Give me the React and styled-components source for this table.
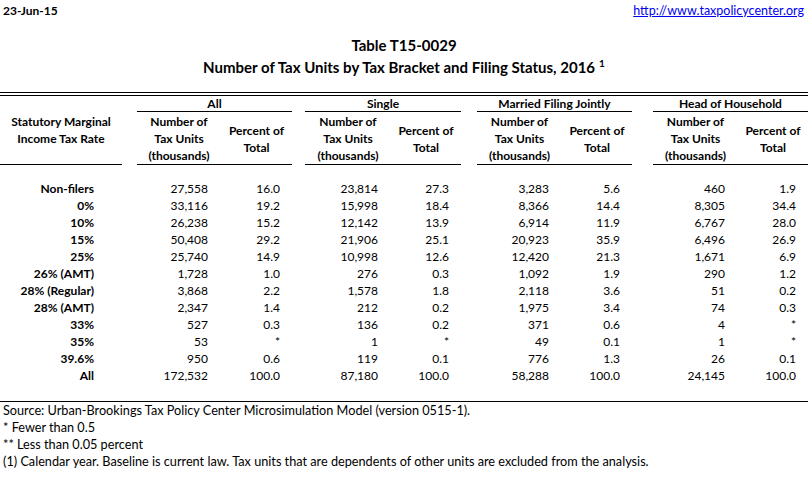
import React from 'react';
import styled, { createGlobalStyle } from 'styled-components';

const GlobalStyle = createGlobalStyle`
  html, body {
    margin: 0;
    padding: 0;
    background: #ffffff;
  }
  body {
    font-family: Lato, "Open Sans", "Liberation Sans", sans-serif;
    color: #000000;
  }
`;

const COLS = '122px 15px 84px 71px 13px 86px 70px 16px 85px 70px 21px 85px 70px';

const groups = ['All', 'Single', 'Married Filing Jointly', 'Head of Household'];

const rows = [
  ['Non-filers', '27,558', '16.0', '23,814', '27.3', '3,283', '5.6', '460', '1.9'],
  ['0%', '33,116', '19.2', '15,998', '18.4', '8,366', '14.4', '8,305', '34.4'],
  ['10%', '26,238', '15.2', '12,142', '13.9', '6,914', '11.9', '6,767', '28.0'],
  ['15%', '50,408', '29.2', '21,906', '25.1', '20,923', '35.9', '6,496', '26.9'],
  ['25%', '25,740', '14.9', '10,998', '12.6', '12,420', '21.3', '1,671', '6.9'],
  ['26% (AMT)', '1,728', '1.0', '276', '0.3', '1,092', '1.9', '290', '1.2'],
  ['28% (Regular)', '3,868', '2.2', '1,578', '1.8', '2,118', '3.6', '51', '0.2'],
  ['28% (AMT)', '2,347', '1.4', '212', '0.2', '1,975', '3.4', '74', '0.3'],
  ['33%', '527', '0.3', '136', '0.2', '371', '0.6', '4', '*'],
  ['35%', '53', '*', '1', '*', '49', '0.1', '1', '*'],
  ['39.6%', '950', '0.6', '119', '0.1', '776', '1.3', '26', '0.1'],
  ['All', '172,532', '100.0', '87,180', '100.0', '58,288', '100.0', '24,145', '100.0'],
];

const notes = [
  'Source: Urban-Brookings Tax Policy Center Microsimulation Model (version 0515-1).',
  '* Fewer than 0.5',
  '** Less than 0.05 percent',
  '(1) Calendar year. Baseline is current law. Tax units that are dependents of other units are excluded from the analysis.',
];

const Page = styled.div`
  width: 808px;
  font-size: 12px;
`;

const TopBar = styled.div`
  display: flex;
  justify-content: space-between;
  align-items: center;
  height: 20px;
  padding: 0 4px 0 3px;
`;

const DateText = styled.span`
  font-weight: 700;
  font-size: 12px;
`;

const Link = styled.a`
  color: #0000ee;
  font-size: 12.5px;
  text-decoration: underline;
`;

const TitleBlock = styled.div`
  display: flex;
  flex-direction: column;
  align-items: center;
  padding-top: 14px;
  margin-bottom: 14px;
`;

const Title = styled.div`
  font-size: 15px;
  font-weight: 700;
  height: 22px;
  line-height: 22px;
`;

const Sup = styled.sup`
  font-size: 10px;
  line-height: 0;
  margin-left: 4px;
  vertical-align: 6px;
`;

const DoubleRule = styled.div`
  height: 2px;
  border-top: 1px solid #000;
  border-bottom: 1px solid #000;
`;

const Row = styled.div`
  display: grid;
  grid-template-columns: ${COLS};
  height: ${(p) => p.$h || 17}px;
  line-height: 17px;
`;

const GroupHead = styled.div`
  grid-column: span 2;
  text-align: center;
  font-weight: 700;
  line-height: 15px;
  border-bottom: 1px solid #000;
`;

const HeadCell = styled.div`
  display: flex;
  flex-direction: column;
  justify-content: ${(p) => (p.$middle ? 'center' : 'flex-start')};
  align-items: center;
  text-align: center;
  font-weight: 700;
  border-bottom: 1px solid #000;
  padding-top: 1px;
`;

const Spacer = styled.div``;

const Label = styled.div`
  text-align: right;
  padding-right: 28px;
  font-weight: 700;
  white-space: nowrap;
`;

const Num = styled.div`
  text-align: right;
  padding-right: ${(p) => (p.$pct ? 12 : 13)}px;
  white-space: nowrap;
`;

const Rule = styled.div`
  border-top: 1px solid #000;
`;

const Note = styled.div`
  height: 17px;
  line-height: 17px;
  font-size: 12.7px;
  padding-left: 3px;
  white-space: nowrap;
`;

const App = () => (
  <Page>
    <GlobalStyle />
    <TopBar>
      <DateText>23-Jun-15</DateText>
      <Link href="#">http://www.taxpolicycenter.org</Link>
    </TopBar>
    <TitleBlock>
      <Title>Table T15-0029</Title>
      <Title>
        Number of Tax Units by Tax Bracket and Filing Status, 2016<Sup>1</Sup>
      </Title>
    </TitleBlock>
    <DoubleRule />
    <Row $h={16}>
      <Spacer />
      <Spacer />
      {groups.map((g, i) => (
        <React.Fragment key={g}>
          <GroupHead>{g}</GroupHead>
          {i < 3 && <Spacer />}
        </React.Fragment>
      ))}
    </Row>
    <Row $h={51}>
      <HeadCell>
        <span>Statutory Marginal</span>
        <span>Income Tax Rate</span>
      </HeadCell>
      <Spacer />
      {groups.map((g, i) => (
        <React.Fragment key={g}>
          <HeadCell>
            <span>Number of</span>
            <span>Tax Units</span>
            <span>(thousands)</span>
          </HeadCell>
          <HeadCell $middle>
            <span>Percent of</span>
            <span>Total</span>
          </HeadCell>
          {i < 3 && <Spacer />}
        </React.Fragment>
      ))}
    </Row>
    <Row />
    {rows.map((r) => (
      <Row key={r[0]}>
        <Label>{r[0]}</Label>
        <Spacer />
        {[0, 1, 2, 3].map((g) => (
          <React.Fragment key={g}>
            <Num>{r[1 + g * 2]}</Num>
            <Num $pct>{r[2 + g * 2]}</Num>
            {g < 3 && <Spacer />}
          </React.Fragment>
        ))}
      </Row>
    ))}
    <Row />
    <Rule />
    {notes.map((n) => (
      <Note key={n}>{n}</Note>
    ))}
  </Page>
);

export default App;
